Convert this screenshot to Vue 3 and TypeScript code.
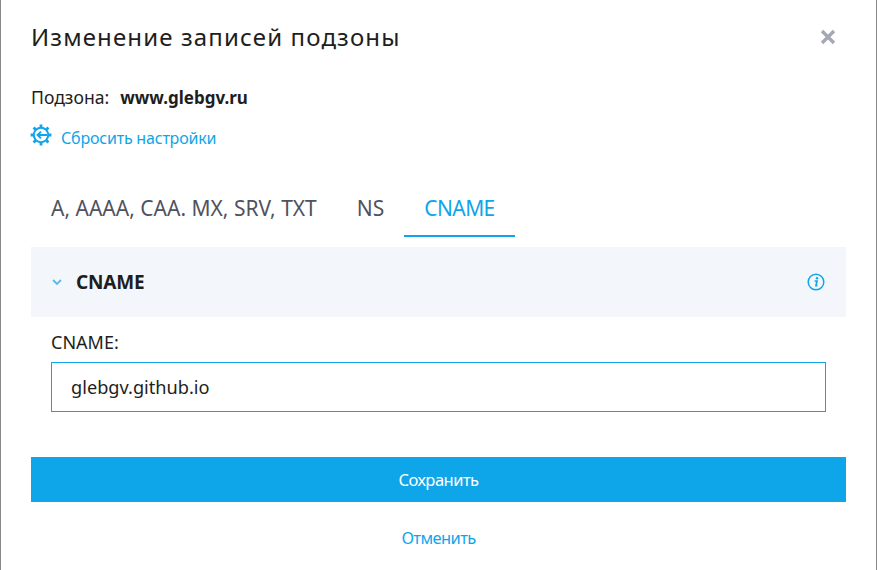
<script setup lang="ts">
const tabs: string[] = ['A, AAAA, CAA. MX, SRV, TXT', 'NS', 'CNAME']
</script>

<template>
  <div class="modal">
    <header class="head">
      <h1 class="title">Изменение записей подзоны</h1>
      <svg class="close" width="16" height="16" viewBox="0 0 16 16"><path d="M2 2L14 14M14 2L2 14" stroke="#a5a9b4" stroke-width="3.4" /></svg>
    </header>
    <div class="zone"><span>Подзона:</span><b>www.glebgv.ru</b></div>
    <a class="reset">
      <svg class="gear" width="22" height="22" viewBox="0 0 22 22" fill="none" stroke="#10a5e9">
        <circle cx="11" cy="11" r="7.2" stroke-width="2" />
        <path d="M11 .6V4M11 18V21.4M.6 11H4M18 11H21.4M3.6 3.6L6 6M16 16L18.4 18.4M18.4 3.6L16 6M6 16L3.6 18.4" stroke-width="2.8" />
        <path d="M17 11H8M11 7.6L7.6 11L11 14.4" stroke-width="2" />
      </svg>
      <span>Сбросить настройки</span>
    </a>
    <nav class="tabs">
      <span v-for="(t, i) in tabs" :key="t" class="tab" :class="{ active: i === 2 }">{{ t }}</span>
    </nav>
    <section class="panel">
      <div class="panel-left">
        <svg width="12" height="8" viewBox="0 0 12 8" fill="none"><path d="M2 2L6 6L10 2" stroke="#5ab9ee" stroke-width="1.8" /></svg>
        <b>CNAME</b>
      </div>
      <svg width="18" height="18" viewBox="0 0 18 18" fill="none">
        <circle cx="9" cy="9" r="7.8" stroke="#10a5e9" stroke-width="1.5" />
        <path d="M7.6 8H10L9 12.6H10.4" stroke="#10a5e9" stroke-width="1.7" />
        <circle cx="10" cy="5.3" r="1.2" fill="#10a5e9" />
      </svg>
    </section>
    <div class="field">
      <label class="label" for="cname">CNAME:</label>
      <input id="cname" class="input" value="glebgv.github.io" />
    </div>
    <button class="save">Сохранить</button>
    <a class="cancel">Отменить</a>
  </div>
</template>

<style>
html, body { margin: 0; background: #fff; }
</style>

<style scoped>
.modal {
  box-sizing: border-box;
  width: 877px;
  height: 570px;
  overflow: hidden;
  border-left: 1px solid #888;
  border-right: 1px solid #888;
  padding: 0 30px;
  font-family: "Noto Sans", sans-serif;
  color: #1e1e20;
  display: flex;
  flex-direction: column;
}
.head { display: flex; justify-content: space-between; align-items: center; height: 74px; padding-right: 10px; }
.title { margin: -2px 0 0; font-size: 24px; font-weight: 400; letter-spacing: 1.14px; }
.close { display: block; }
.zone { display: flex; gap: 11px; font-size: 17.6px; height: 24px; align-items: center; margin-top: 11px; }
.zone b { font-weight: 700; font-size: 17px; }
.reset { display: flex; align-items: center; gap: 9px; color: #10a5e9; font-size: 16px; letter-spacing: -0.2px; height: 24px; margin-top: 17px; }
.gear { margin-top: -6px; margin-left: -1px; }
.tabs { display: flex; gap: 0; margin-top: 30px; height: 57px; }
.tab { padding: 14px 20px 0; font-size: 21px; color: #50525e; box-sizing: border-box; height: 57px; }
.tab.active { color: #10a5e9; border-bottom: 2px solid #10a5e9; letter-spacing: -0.6px; }
.panel { margin-top: 10px; height: 70px; background: #f3f7fb; padding: 0 21px 0 20px; display: flex; align-items: center; justify-content: space-between; }
.panel-left { display: flex; align-items: center; gap: 13px; font-size: 19px; letter-spacing: -0.15px; }
.field { padding: 0 20px; margin-top: 13px; }
.label { display: block; font-size: 18px; height: 24px; line-height: 24px; }
.input { display: block; box-sizing: border-box; width: 100%; height: 50px; margin-top: 8px; border: 1px solid #10a5e9; padding: 0 19px; font: inherit; font-size: 18.2px; color: #1e1e20; outline: none; border-radius: 0; }
.save { margin-top: 45px; height: 45px; border: 0; background: #0fa5e9; color: #fff; font: inherit; font-size: 16.5px; letter-spacing: -0.5px; flex: none; }
.cancel { margin-top: 24px; text-align: center; color: #10a5e9; font-size: 16.5px; letter-spacing: -0.6px; }
</style>
